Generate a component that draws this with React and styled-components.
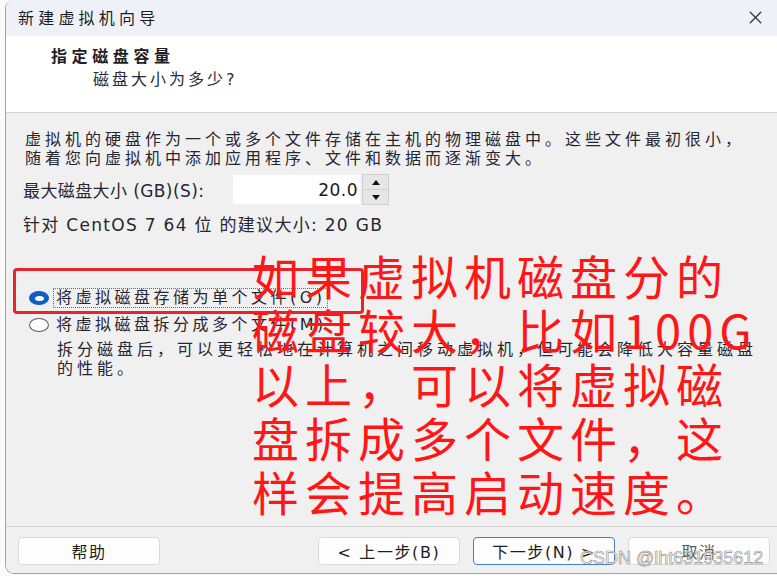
import React from 'react';
import styled, { createGlobalStyle } from 'styled-components';
import { X } from 'lucide-react';

const GlobalStyle = createGlobalStyle`
  html, body {
    margin: 0;
    padding: 0;
    background: #fbfbfb;
  }
  * {
    box-sizing: border-box;
  }
`;

const CJK = `"Noto Sans CJK SC", sans-serif`;
const MIXED = `"DejaVu Sans", "Noto Sans CJK SC", sans-serif`;

// Styled Components
const Page = styled.div`
  width: 777px;
  height: 576px;
  position: relative;
  overflow: hidden;
  padding-left: 5px;
`;

const Window = styled.div`
  width: 772px;
  height: 574px;
  display: flex;
  flex-direction: column;
  border-left: 1.5px solid #a3a3a3;
  border-bottom: 1.5px solid #a3a3a3;
  border-top-left-radius: 8px;
  border-bottom-left-radius: 9px;
  overflow: hidden;
  background: #f0f0f0;
`;

const TitleBar = styled.div`
  height: 36px;
  flex-shrink: 0;
  display: flex;
  align-items: center;
  justify-content: space-between;
  padding: 0 11px 2px 12px;
  background: #eef2f8;
  font-family: ${CJK};
  font-size: 16px;
  letter-spacing: 4.2px;
  color: #1c1c1c;
`;

const CloseIcon = styled(X)`
  color: #333;
`;

const Header = styled.div`
  height: 77px;
  flex-shrink: 0;
  background: #ffffff;
  border-bottom: 1px solid #d4d4d4;
  padding: 10px 0 0 45px;
  font-family: ${MIXED};
  color: #1e1e24;
`;

const HeaderTitle = styled.div`
  font-size: 16px;
  font-weight: 700;
  letter-spacing: 4.6px;
  line-height: 22px;
`;

const HeaderSub = styled.div`
  font-size: 16px;
  letter-spacing: 3px;
  line-height: 22px;
  margin: 1px 0 0 42px;
  color: #2a2a3a;
`;

const Body = styled.div`
  flex: 1;
  position: relative;
  padding: 17px 0 0 17px;
  font-family: ${MIXED};
  color: #262632;
`;

const Para = styled.div`
  font-size: 16px;
  letter-spacing: 4px;
  line-height: 19px;
  white-space: nowrap;
  margin-left: ${(p) => p.$indent || 0}px;
`;

const SizeRow = styled.div`
  display: flex;
  align-items: center;
  margin-top: 6px;
  height: 31px;
`;

const Label = styled.span`
  font-size: 17px;
  letter-spacing: 0.4px;
  white-space: nowrap;
  width: 209px;
`;

const NumberInput = styled.div`
  width: 129px;
  height: 31px;
  background: #ffffff;
  border: 1px solid #f2f2f2;
  display: flex;
  align-items: center;
  justify-content: flex-end;
  padding-right: 2px;
  font-size: 17px;
  letter-spacing: 0.5px;
  color: #1a1a1a;
`;

const Spinner = styled.div`
  width: 27px;
  height: 31px;
  margin-left: 1px;
  display: flex;
  flex-direction: column;
  border: 1px solid #cfcfcf;
  background: #e6e6e6;
`;

const SpinHalf = styled.div`
  flex: 1;
  display: flex;
  align-items: center;
  justify-content: center;
  & + & {
    border-top: 1px solid #d2d2d2;
  }
`;

const Recommend = styled.div`
  margin-top: 10px;
  font-size: 17px;
  letter-spacing: 1.3px;
  line-height: 20px;
  white-space: nowrap;
`;

const Options = styled.div`
  margin-top: 52px;
  display: flex;
  flex-direction: column;
  gap: 5px;
`;

const OptionRow = styled.div`
  display: flex;
  align-items: center;
  height: 22px;
`;

const Radio = styled.span`
  width: 20px;
  height: 14px;
  border-radius: 50%;
  flex-shrink: 0;
  margin-left: 6px;
  display: flex;
  align-items: center;
  justify-content: center;
  background: ${(p) => (p.$checked ? '#0a5fc0' : '#ffffff')};
  border: 1.5px solid ${(p) => (p.$checked ? '#0a5fc0' : '#5c5c5c')};

  &::after {
    content: '';
    display: ${(p) => (p.$checked ? 'block' : 'none')};
    width: 9px;
    height: 5px;
    border-radius: 50%;
    background: #ffffff;
  }
`;

const OptionText = styled.span`
  margin-left: 5px;
  padding: 0 1px 0 2px;
  font-size: 16px;
  letter-spacing: 3.5px;
  line-height: 18px;
  white-space: nowrap;
  outline: ${(p) => (p.$focused ? '1px dotted #6a6a6a' : 'none')};
`;

const Description = styled.div`
  margin-top: 4px;
  padding-left: 34px;
`;

const Footer = styled.div`
  flex-shrink: 0;
  display: flex;
  justify-content: space-between;
  padding: 10px 7px 8px 12px;
  border-top: 1px solid #d2d2d2;
  background: #f0f0f0;
`;

const ButtonGroup = styled.div`
  display: flex;
  gap: 13px;
`;

const Button = styled.button`
  width: 142px;
  height: 28px;
  padding: 0;
  border-radius: 4px;
  background: #fdfdfd;
  border: 1px solid ${(p) => (p.$focused ? '#3f80d6' : '#dadada')};
  font-family: ${MIXED};
  font-size: 16px;
  letter-spacing: 1.6px;
  color: ${(p) => (p.$muted ? '#5a5a5a' : '#1e1e1e')};
`;

// annotations drawn over the screenshot
const RedBox = styled.div`
  position: absolute;
  left: 7px;
  top: 155px;
  width: 351px;
  height: 46px;
  border: 3px solid #e8232b;
  border-radius: 4px;
  pointer-events: none;
`;

const BigNote = styled.div`
  position: absolute;
  left: 246px;
  top: 135px;
  font-family: ${CJK};
  font-size: 47px;
  letter-spacing: 6px;
  line-height: 54px;
  color: #ff1616;
  white-space: nowrap;
`;

const Watermark = styled.div`
  position: absolute;
  left: 580px;
  top: 548px;
  font-family: "Liberation Sans", Arial, sans-serif;
  font-size: 18px;
  color: rgba(255, 255, 255, 0.85);
  -webkit-text-stroke: 0.6px #8c8c8c;
  white-space: nowrap;
`;

const Arrow = ({ up }) => (
  <svg width="8" height="5" viewBox="0 0 8 5">
    <path d={up ? 'M0 5 L4 0 L8 5 Z' : 'M0 0 L4 5 L8 0 Z'} fill="#111" />
  </svg>
);

const App = () => {
  return (
    <Page>
      <GlobalStyle />
      <Window>
        <TitleBar>
          <span>新建虚拟机向导</span>
          <CloseIcon size={21} strokeWidth={1.5} />
        </TitleBar>

        <Header>
          <HeaderTitle>指定磁盘容量</HeaderTitle>
          <HeaderSub>磁盘大小为多少?</HeaderSub>
        </Header>

        <Body>
          <Para $indent={2}>
            虚拟机的硬盘作为一个或多个文件存储在主机的物理磁盘中。这些文件最初很小，
            <br />
            随着您向虚拟机中添加应用程序、文件和数据而逐渐变大。
          </Para>

          <SizeRow>
            <Label>最大磁盘大小 (GB)(S):</Label>
            <NumberInput>20.0</NumberInput>
            <Spinner>
              <SpinHalf><Arrow up /></SpinHalf>
              <SpinHalf><Arrow /></SpinHalf>
            </Spinner>
          </SizeRow>

          <Recommend>针对 CentOS 7 64 位 的建议大小: 20 GB</Recommend>

          <Options>
            <OptionRow>
              <Radio $checked />
              <OptionText $focused>将虚拟磁盘存储为单个文件(O)</OptionText>
            </OptionRow>
            <OptionRow>
              <Radio />
              <OptionText>将虚拟磁盘拆分成多个文件(M)</OptionText>
            </OptionRow>
          </Options>

          <Description>
            <Para>
              拆分磁盘后，可以更轻松地在计算机之间移动虚拟机，但可能会降低大容量磁盘
              <br />
              的性能。
            </Para>
          </Description>

          <RedBox />
          <BigNote>
            如果虚拟机磁盘分的
            <br />
            磁盘较大，比如100G
            <br />
            以上，可以将虚拟磁
            <br />
            盘拆成多个文件，这
            <br />
            样会提高启动速度。
          </BigNote>
        </Body>

        <Footer>
          <Button>帮助</Button>
          <ButtonGroup>
            <Button>&lt; 上一步(B)</Button>
            <Button $focused>下一步(N) &gt;</Button>
            <Button $muted>取消</Button>
          </ButtonGroup>
        </Footer>
      </Window>
      <Watermark>CSDN @lht631935612</Watermark>
    </Page>
  );
};

export default App;
